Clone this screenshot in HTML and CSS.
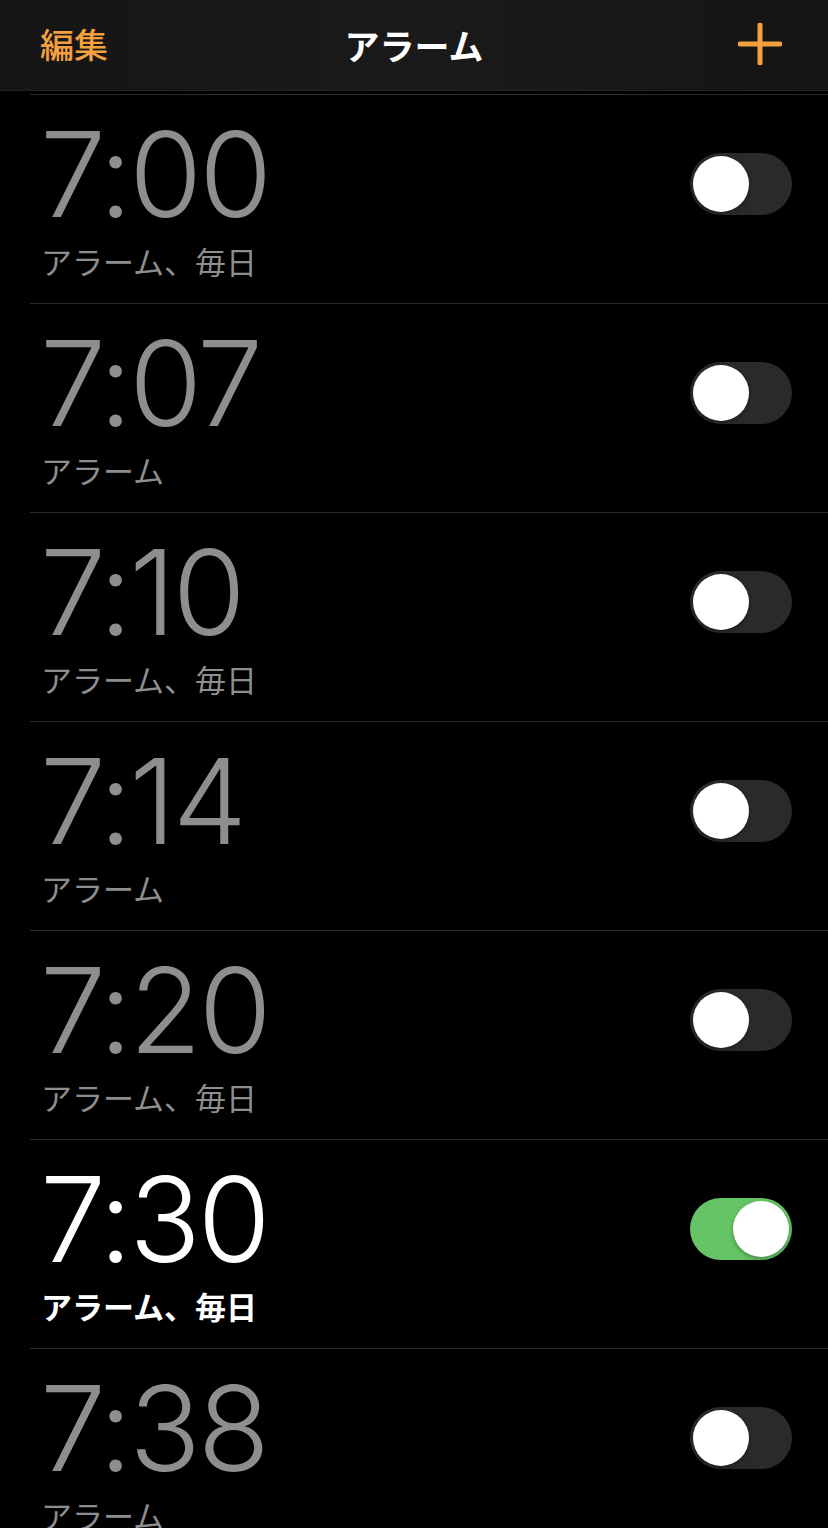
FILE: index.html
```html
<!DOCTYPE html>
<html lang="ja">
<head>
<meta charset="utf-8">
<title>アラーム</title>
<link rel="stylesheet" href="styles.css">
</head>
<body>
<header class="nav">
  <span class="nav-edit">編集</span>
  <span class="nav-title">アラーム</span>
  <span class="nav-add">
    <svg width="44" height="42" viewBox="0 0 44 42"><path d="M22 2v38M2 21h40" stroke="#f4a03c" stroke-width="5" stroke-linecap="round"/></svg>
  </span>
</header>
<main class="list">
  <div class="row"><div class="info"><div class="time">7:00</div><div class="label">アラーム、毎日</div></div><div class="toggle"><span class="knob"></span></div></div>
  <div class="row"><div class="info"><div class="time">7:07</div><div class="label">アラーム</div></div><div class="toggle"><span class="knob"></span></div></div>
  <div class="row"><div class="info"><div class="time">7:10</div><div class="label">アラーム、毎日</div></div><div class="toggle"><span class="knob"></span></div></div>
  <div class="row"><div class="info"><div class="time">7:14</div><div class="label">アラーム</div></div><div class="toggle"><span class="knob"></span></div></div>
  <div class="row"><div class="info"><div class="time">7:20</div><div class="label">アラーム、毎日</div></div><div class="toggle"><span class="knob"></span></div></div>
  <div class="row on"><div class="info"><div class="time">7:30</div><div class="label">アラーム、毎日</div></div><div class="toggle"><span class="knob"></span></div></div>
  <div class="row"><div class="info"><div class="time">7:38</div><div class="label">アラーム</div></div><div class="toggle"><span class="knob"></span></div></div>
</main>
</body>
</html>
```
FILE: styles.css
```css
html, body {
  margin: 0;
  padding: 0;
  background: #000;
  height: 1528px;
  overflow: hidden;
}
body {
  font-family: "Noto Sans CJK JP", "Noto Sans", sans-serif;
  color: #fff;
}
.nav {
  height: 90px;
  background: linear-gradient(90deg, #151515 0%, #1a1a1a 50%, #151515 100%);
  border-bottom: 1px solid #222;
  display: flex;
  align-items: center;
  justify-content: space-between;
  padding: 0 46px 0 40px;
  position: relative;
}
.nav-edit {
  color: #f4a03c;
  font-size: 34px;
  font-weight: 500;
  line-height: 1;
  margin-top: -2px;
}
.nav-title {
  position: absolute;
  left: 0;
  right: 0;
  text-align: center;
  font-size: 35px;
  font-weight: 700;
  line-height: 1;
  pointer-events: none;
  margin-top: -2px;
}
.nav-add {
  display: flex;
  margin-top: -2px;
}
.list {
  margin-top: 3px;
  margin-left: 30px;
}
.row {
  height: 208px;
  border-top: 1px solid #2b2b2d;
  display: flex;
  align-items: flex-start;
  justify-content: space-between;
  padding-right: 36px;
}
.info {
  padding-left: 10px;
  display: flex;
  flex-direction: column;
}
.time {
  font-family: Inter, "Liberation Sans", sans-serif;
  font-weight: 300;
  font-size: 118px;
  line-height: 1;
  letter-spacing: -3px;
  color: #8e8e90;
  margin-top: 20px;
}
.label {
  font-size: 31px;
  line-height: 1;
  color: #8e8e90;
  margin-top: 12px;
  padding-left: 1px;
}
.row.on .time { color: #fff; }
.row.on .label { color: #fff; font-weight: 700; }
.toggle {
  width: 102px;
  height: 62px;
  border-radius: 31px;
  background: #2a2a2b;
  margin-top: 58px;
  position: relative;
}
.knob {
  position: absolute;
  top: 3px;
  left: 3px;
  width: 56px;
  height: 56px;
  border-radius: 50%;
  background: #fff;
  box-shadow: 0 2px 4px rgba(0,0,0,0.3);
}
.row.on .toggle { background: #65c466; }
.row.on .knob { left: 43px; }
```
